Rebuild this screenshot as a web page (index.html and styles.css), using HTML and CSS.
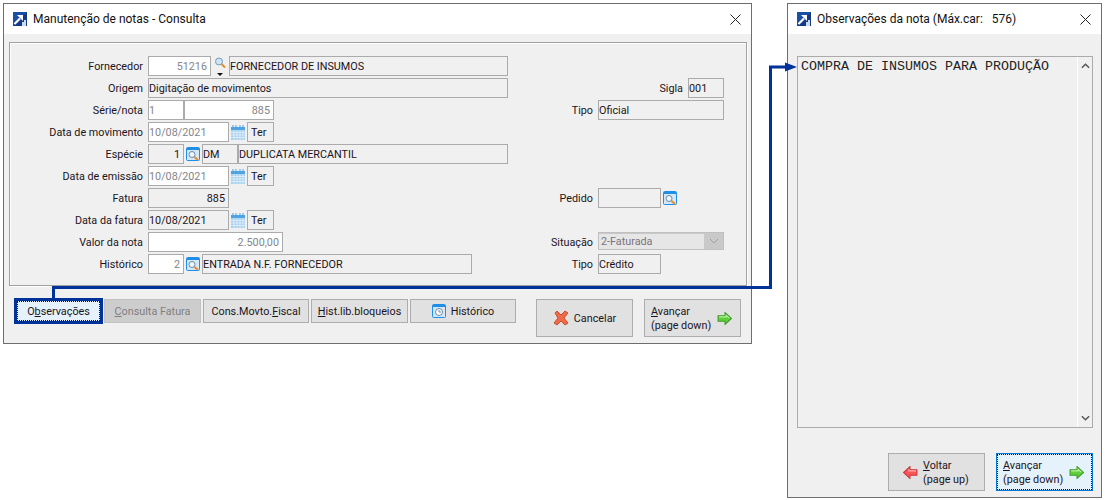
FILE: index.html
```html
<!DOCTYPE html>
<html lang="pt-BR">
<head>
<meta charset="utf-8">
<title>Manutenção de notas</title>
<link rel="stylesheet" href="styles.css">
</head>
<body>
<svg class="defs" width="0" height="0">
  <defs>
    <symbol id="logo" viewBox="0 0 14 14">
      <rect width="14" height="14" fill="#1a4fa8"/>
      <path d="M0 14 L14 0 V14Z" fill="#123a86"/>
      <path d="M1.5 12 L7 6.5" stroke="#fff" stroke-width="2.2"/>
      <path d="M4 3 H10 V9 Z" fill="#fff"/>
      <path d="M9 14 V10 H11 V8 H13 V14Z" fill="#cfd9ea"/>
    </symbol>
    <symbol id="look" viewBox="0 0 14 14">
      <rect x=".5" y=".5" width="13" height="13" rx="1" fill="#d5e7f5" stroke="#1e8fe8"/>
      <rect x="1" y="1" width="12" height="2" fill="#1e8fe8"/>
      <circle cx="6" cy="7.5" r="3" fill="#eef6fb" stroke="#6b8ba6"/>
      <path d="M8.5 10 L12 13" stroke="#e58a2e" stroke-width="2"/>
    </symbol>
    <symbol id="cal" viewBox="0 0 14 15">
      <rect y="2" width="14" height="13" fill="#a5d0ef"/>
      <rect y="2" width="14" height="3" fill="#4fa3e0"/>
      <path d="M2 0 V3 M5 0 V3 M9 0 V3 M12 0 V3" stroke="#4fa3e0"/>
      <path d="M0 7.5 H14 M0 10 H14 M0 12.5 H14 M3 5 V15 M6 5 V15 M9 5 V15 M12 5 V15" stroke="#e4f1fa" stroke-width=".8"/>
    </symbol>
    <symbol id="arrow-g" viewBox="0 0 14 12">
      <path d="M1 3.5 H7.5 V0.5 L13.5 6 L7.5 11.5 V8.5 H1Z" fill="#5fcf3c" stroke="#3f9a2a"/>
      <path d="M2 4.5 H8.5 V3 L11.5 5.5" fill="none" stroke="#b5f09c"/>
    </symbol>
    <symbol id="arrow-r" viewBox="0 0 14 12">
      <path d="M13 3.5 H6.5 V0.5 L.5 6 L6.5 11.5 V8.5 H13Z" fill="#f8545a" stroke="#cc3a3a"/>
      <path d="M12 4.5 H5.5 V3" fill="none" stroke="#ffb0b0"/>
    </symbol>
  </defs>
</svg>

<section class="win win-main">
  <header class="title">
    <svg class="logo"><use href="#logo"/></svg>
    <span class="title-text">Manutenção de notas - Consulta</span>
    <svg class="close" viewBox="0 0 11 11"><path d="M.5 .5 L10.5 10.5 M10.5 .5 L.5 10.5" stroke="#222" fill="none"/></svg>
  </header>
  <div class="group">
    <div class="row">
      <label class="lbl">Fornecedor</label>
      <div class="left">
        <span class="f w63 white num dim">51216</span>
        <span class="search">
          <svg viewBox="0 0 14 12" width="14" height="12"><circle cx="6" cy="4.5" r="3.5" fill="#cfe3f2" stroke="#6f9fc4"/><path d="M8.5 7 L12 10.5" stroke="#e58a2e" stroke-width="2"/></svg>
          <i class="tri"></i>
        </span>
        <span class="f w279">FORNECEDOR DE INSUMOS</span>
      </div>
    </div>
    <div class="row">
      <label class="lbl">Origem</label>
      <div class="left"><span class="f w360">Digitação de movimentos</span></div>
      <div class="right end"><label class="rl">Sigla</label><span class="f w36">001</span></div>
    </div>
    <div class="row">
      <label class="lbl">Série/nota</label>
      <div class="left"><span class="f w36 white dim">1</span><span class="f w90 white num dim">885</span></div>
      <div class="right"><label class="rlbl">Tipo</label><span class="f w126">Oficial</span></div>
    </div>
    <div class="row">
      <label class="lbl">Data de movimento</label>
      <div class="left"><span class="f w81 white dim">10/08/2021</span><svg class="ic-cal"><use href="#cal"/></svg><span class="f ter">Ter</span></div>
    </div>
    <div class="row">
      <label class="lbl">Espécie</label>
      <div class="left"><span class="f w36 num">1</span><svg class="ic-look"><use href="#look"/></svg><span class="f w36">DM</span><span class="f w270">DUPLICATA MERCANTIL</span></div>
    </div>
    <div class="row">
      <label class="lbl">Data de emissão</label>
      <div class="left"><span class="f w81 white dim">10/08/2021</span><svg class="ic-cal"><use href="#cal"/></svg><span class="f ter">Ter</span></div>
    </div>
    <div class="row">
      <label class="lbl">Fatura</label>
      <div class="left"><span class="f w81 num">885</span></div>
      <div class="right"><label class="rlbl">Pedido</label><span class="f w63"></span><svg class="ic-look"><use href="#look"/></svg></div>
    </div>
    <div class="row">
      <label class="lbl">Data da fatura</label>
      <div class="left"><span class="f w81">10/08/2021</span><svg class="ic-cal"><use href="#cal"/></svg><span class="f ter">Ter</span></div>
    </div>
    <div class="row">
      <label class="lbl">Valor da nota</label>
      <div class="left"><span class="f w135 white num dim">2.500,00</span></div>
      <div class="right"><label class="rlbl">Situação</label>
        <span class="combo"><span class="combo-val">2-Faturada</span>
          <svg class="chev" viewBox="0 0 10 6"><path d="M1 1 L5 5 L9 1" fill="none" stroke="#a0a0a0"/></svg>
        </span>
      </div>
    </div>
    <div class="row">
      <label class="lbl">Histórico</label>
      <div class="left"><span class="f w36 white num dim">2</span><svg class="ic-look"><use href="#look"/></svg><span class="f w270">ENTRADA N.F. FORNECEDOR</span></div>
      <div class="right"><label class="rlbl">Tipo</label><span class="f w63">Crédito</span></div>
    </div>
  </div>
  <div class="bar">
    <button class="obs"><span class="dots">O<u>b</u>servações</span></button>
    <button class="b off w97"><u>C</u>onsulta Fatura</button>
    <button class="b w106">Cons.Movto.<u>F</u>iscal</button>
    <button class="b w97"><u>H</u>ist.lib.bloqueios</button>
    <button class="b w106 hist">
      <svg class="ic-hist" viewBox="0 0 14 14"><rect x=".5" y=".5" width="13" height="13" rx="1" fill="#d5e7f5" stroke="#1e8fe8"/><rect x="1" y="1" width="12" height="2" fill="#1e8fe8"/><circle cx="7" cy="8" r="3.5" fill="#fff" stroke="#6b8ba6"/><path d="M7 6 V8 H9" fill="none" stroke="#6b8ba6"/></svg>
      <span>Histórico</span>
    </button>
    <button class="big cancel">
      <svg class="ic-x" viewBox="0 0 16 16"><path d="M2 3 L4 1 L8 5 L12 1 L15 3 L11 8 L15 13 L12 15 L8 11 L4 15 L1 13 L5 8Z" fill="#ee6a4a" stroke="#c9502f"/></svg>
      <span>Cancelar</span>
    </button>
    <button class="big next">
      <span class="two"><u>A</u>vançar<br>(page down)</span>
      <svg class="ic-arrow"><use href="#arrow-g"/></svg>
    </button>
  </div>
</section>

<section class="win win-obs">
  <header class="title">
    <svg class="logo"><use href="#logo"/></svg>
    <span class="title-text obs-title">Observações da nota (Máx.car:   576)</span>
    <svg class="close" viewBox="0 0 11 11"><path d="M.5 .5 L10.5 10.5 M10.5 .5 L.5 10.5" stroke="#222" fill="none"/></svg>
  </header>
  <div class="memo">
    <div class="memo-text">COMPRA DE INSUMOS PARA PRODUÇÃO</div>
    <div class="scroll">
      <svg class="chev2" viewBox="0 0 10 6"><path d="M1 5 L5 1 L9 5" fill="none" stroke="#555" stroke-width="1.6"/></svg>
      <svg class="chev2" viewBox="0 0 10 6"><path d="M1 1 L5 5 L9 1" fill="none" stroke="#555" stroke-width="1.6"/></svg>
    </div>
  </div>
  <div class="obs-bar">
    <button class="big back">
      <svg class="ic-arrow"><use href="#arrow-r"/></svg>
      <span class="two"><u>V</u>oltar<br>(page up)</span>
    </button>
    <button class="big next focus">
      <span class="two"><u>A</u>vançar<br>(page down)</span>
      <svg class="ic-arrow"><use href="#arrow-g"/></svg>
    </button>
  </div>
</section>

<svg class="link" viewBox="0 0 1106 500">
  <path d="M53.5 298 V287.5 H770.5 V67 H786" fill="none" stroke="#003399" stroke-width="3"/>
  <path d="M785 62.5 L797 67 L785 71.5Z" fill="#003399"/>
</svg>
</body>
</html>
```

FILE: styles.css
```css
* { box-sizing: border-box; }
html, body { margin: 0; padding: 0; background: #fff; }
body {
  position: relative;
  width: 1106px;
  height: 500px;
  overflow: hidden;
  font: 10.8px/1 Roboto, sans-serif;
  color: #1b1420;
}
.defs { position: absolute; }

.win {
  position: absolute;
  background: #f0f0f0;
  border: 1px solid #6e6e6e;
  display: flex;
  flex-direction: column;
}
.win-main { left: 3px; top: 3px; width: 749px; height: 341px; }
.win-obs { left: 787px; top: 3px; width: 315px; height: 495px; }

.title {
  height: 30px;
  flex: none;
  background: #fff;
  display: flex;
  align-items: center;
  padding: 0 8px 0 9px;
}
.logo { width: 14px; height: 14px; flex: none; }
.title-text { margin-left: 6px; font-size: 12px; flex: 1; white-space: pre; color: #111; }
.close { width: 11px; height: 11px; flex: none; margin-right: 2px; }

.group {
  margin: 8px 0 0 5px;
  width: 738px;
  height: 244px;
  border: 1px solid #a0a0a0;
  box-shadow: inset 1px 1px 0 #fff, 1px 1px 0 #fff;
  padding-top: 13px;
}
.row { display: flex; height: 20px; margin-bottom: 2px; align-items: center; }
.lbl { width: 133px; margin-right: 5px; padding-top: 2px; text-align: right; white-space: nowrap; }
.left { width: 392px; height: 20px; display: flex; align-items: center; flex: none; }
.right { width: 184px; height: 20px; display: flex; align-items: center; flex: none; }
.right.end { justify-content: flex-end; }
.rl { margin-right: 5px; padding-top: 2px; }
.rlbl { width: 53px; margin-right: 5px; padding-top: 2px; text-align: right; }

.f {
  height: 20px;
  border: 1.5px solid #ababab;
  background: #f0f0f0;
  display: block;
  flex: none;
  padding: 0;
  line-height: 19px;
  white-space: nowrap;
  overflow: hidden;
}
.white { background: #fff; }
.dim { color: #85858a; }
.num { text-align: right; padding-right: 3px; }
.w36 { width: 36px; }
.w63 { width: 63px; }
.w81 { width: 81px; }
.w90 { width: 90px; }
.w126 { width: 126px; }
.w135 { width: 135px; }
.w270 { width: 270px; }
.w279 { width: 279px; }
.w360 { width: 360px; }
.ter { width: 27px; margin-left: 2px; padding-left: 3px; }

.search { width: 18px; height: 20px; flex: none; display: flex; flex-direction: column; align-items: center; padding-top: 1px; position: relative; }
.tri { width: 0; height: 0; border: 3px solid transparent; border-top: 3px solid #111; border-bottom: 0; margin-top: 4px; }
.ic-look { width: 14px; height: 14px; flex: none; margin: 0 2px; }
.ic-cal { width: 14px; height: 15px; flex: none; margin-left: 2px; }

.combo { width: 126px; height: 18px; background: #c9c9c9; border: 1.5px solid #c0c0c0; display: flex; align-items: center; flex: none; align-self: flex-start; }
.combo-val { width: 105px; height: 15px; background: #e6e6e6; color: #7b7280; line-height: 15px; padding-left: 2px; }
.chev { width: 10px; height: 6px; margin-left: 5px; }

.bar { display: flex; align-items: flex-start; padding: 12px 0 0 10px; }
.b, .big, .obs {
  font: inherit;
  color: inherit;
  background: #e1e1e1;
  border: 1.5px solid #adadad;
  padding: 0;
  flex: none;
}
.b { height: 24px; margin: 1px 2px 0 0; padding-top: 2px; }
.w97 { width: 97px; }
.w106 { width: 106px; }
.off { background: #cdcdcd; color: #7f7f7f; border-color: #c2c2c2; }
.obs {
  width: 89px;
  height: 26px;
  border: 3px solid #003399;
  background: #e5f1fb;
  margin-right: 1px;
  padding: 0;
}
.dots { display: block; height: 100%; border: 1px dotted #111; line-height: 19px; }
.hist { display: flex; align-items: center; justify-content: center; margin-right: 20px; }
.ic-hist { width: 14px; height: 14px; margin-right: 5px; margin-top: -2px; }
.big {
  width: 97px;
  height: 38px;
  margin-top: 1px;
  display: flex;
  align-items: center;
  text-align: left;
}
.cancel { justify-content: center; margin-right: 11px; }
.cancel span { padding-top: 2px; }
.ic-x { width: 16px; height: 16px; margin-right: 5px; }
.two { line-height: 14px; display: block; padding: 2px 0 0 6px; white-space: nowrap; }
.ic-arrow { width: 15px; height: 13px; flex: none; margin-left: auto; margin-right: 8px; }
.back .ic-arrow { margin-left: 14px; margin-right: 0; }
.back .two { padding-left: 5px; }
.focus { background: #e5f1fb; border: 1px solid #0078d7; outline: 1px dotted #111; outline-offset: -2px; }

.memo {
  margin: 22px 0 0 9px;
  width: 296px;
  height: 372px;
  border: 1.5px solid #ababab;
  display: flex;
  background: #f0f0f0;
}
.memo-text { flex: 1; font: 13.33px/1 "Liberation Mono", monospace; padding: 3px 3px; white-space: nowrap; color: #222; }
.scroll { width: 15px; display: flex; flex-direction: column; justify-content: space-between; align-items: center; padding: 6px 0; border-left: 1px solid #fff; }
.chev2 { width: 9px; height: 6px; }
.obs-bar { display: flex; gap: 11px; margin: 25px 0 0 100px; }
.obs-bar .big { margin: 0; }

.link { position: absolute; left: 0; top: 0; width: 1106px; height: 500px; pointer-events: none; }
```
